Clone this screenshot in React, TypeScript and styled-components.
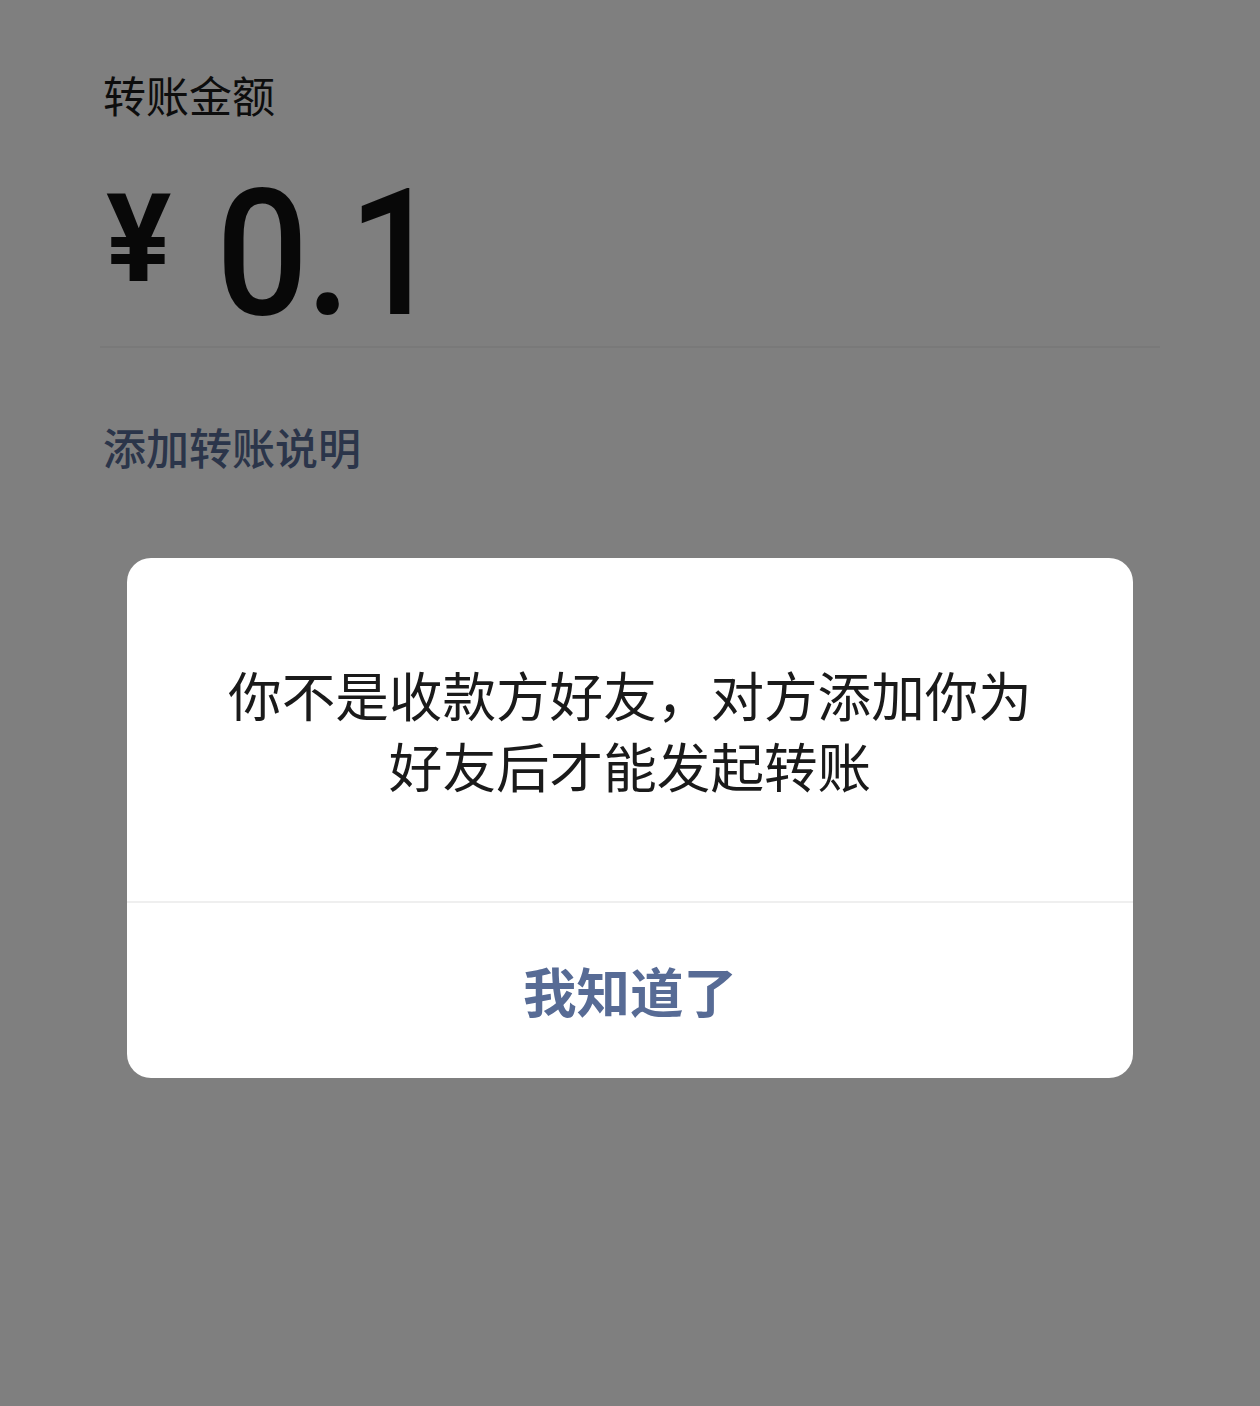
import React from 'react';
import styled, { createGlobalStyle } from 'styled-components';

const GlobalStyle = createGlobalStyle`
  html, body {
    margin: 0;
    padding: 0;
    background: #ffffff;
  }
  #root {
    min-height: 1406px;
  }
`;

const cjk = `"Noto Sans CJK SC", "Noto Sans", sans-serif`;

const Page = styled.main`
  width: 1260px;
  height: 1406px;
  box-sizing: border-box;
  padding: 64px 100px 0 103px;
  background: #ffffff;
  font-family: ${cjk};
`;

const Label = styled.div`
  font-size: 43px;
  line-height: 60px;
  color: #1a1a1a;
`;

const AmountRow = styled.div`
  display: flex;
  align-items: flex-start;
  padding-top: 41px;
  height: 224px;
  box-sizing: border-box;
  border-bottom: 2px solid #f2f2f2;
  margin-left: -3px;
`;

const Currency = styled.span`
  font-family: Roboto, "Noto Sans", sans-serif;
  font-weight: 700;
  font-size: 122px;
  line-height: 1;
  color: #111111;
  margin: 14px 0 0 6px;
`;

const Amount = styled.span`
  display: inline-block;
  font-family: Roboto, "Noto Sans", sans-serif;
  font-weight: 500;
  font-size: 177px;
  line-height: 1;
  color: #111111;
  margin-left: 45px;
  letter-spacing: -3px;
  transform: scaleX(0.92);
  transform-origin: left top;
`;

const AddNote = styled.div`
  margin-top: 68px;
  font-size: 43px;
  line-height: 60px;
  font-weight: 500;
  color: #576b95;
`;

const Mask = styled.div`
  position: fixed;
  inset: 0;
  background: rgba(0, 0, 0, 0.5);
  display: flex;
  justify-content: center;
  align-items: flex-start;
  padding-top: 558px;
`;

const Dialog = styled.div`
  width: 1006px;
  background: #ffffff;
  border-radius: 24px;
  overflow: hidden;
  font-family: ${cjk};
`;

const Message = styled.div`
  height: 345px;
  box-sizing: border-box;
  display: flex;
  align-items: center;
  justify-content: center;
  text-align: center;
  padding: 0 60px 2px;
  font-size: 53.6px;
  line-height: 71px;
  color: #1a1a1a;
  border-bottom: 2px solid #efefef;
`;

const ActionButton = styled.button`
  display: block;
  width: 100%;
  height: 175px;
  border: none;
  background: transparent;
  font-family: ${cjk};
  font-size: 53.5px;
  font-weight: 700;
  color: #576b95;
  padding: 0 0 2px;
  cursor: pointer;
`;

export default function App() {
  return (
    <>
      <GlobalStyle />
      <Page>
        <Label>转账金额</Label>
        <AmountRow>
          <Currency>¥</Currency>
          <Amount>0.1</Amount>
        </AmountRow>
        <AddNote>添加转账说明</AddNote>
      </Page>
      <Mask>
        <Dialog>
          <Message>
            你不是收款方好友，对方添加你为
            <br />
            好友后才能发起转账
          </Message>
          <ActionButton>我知道了</ActionButton>
        </Dialog>
      </Mask>
    </>
  );
}
